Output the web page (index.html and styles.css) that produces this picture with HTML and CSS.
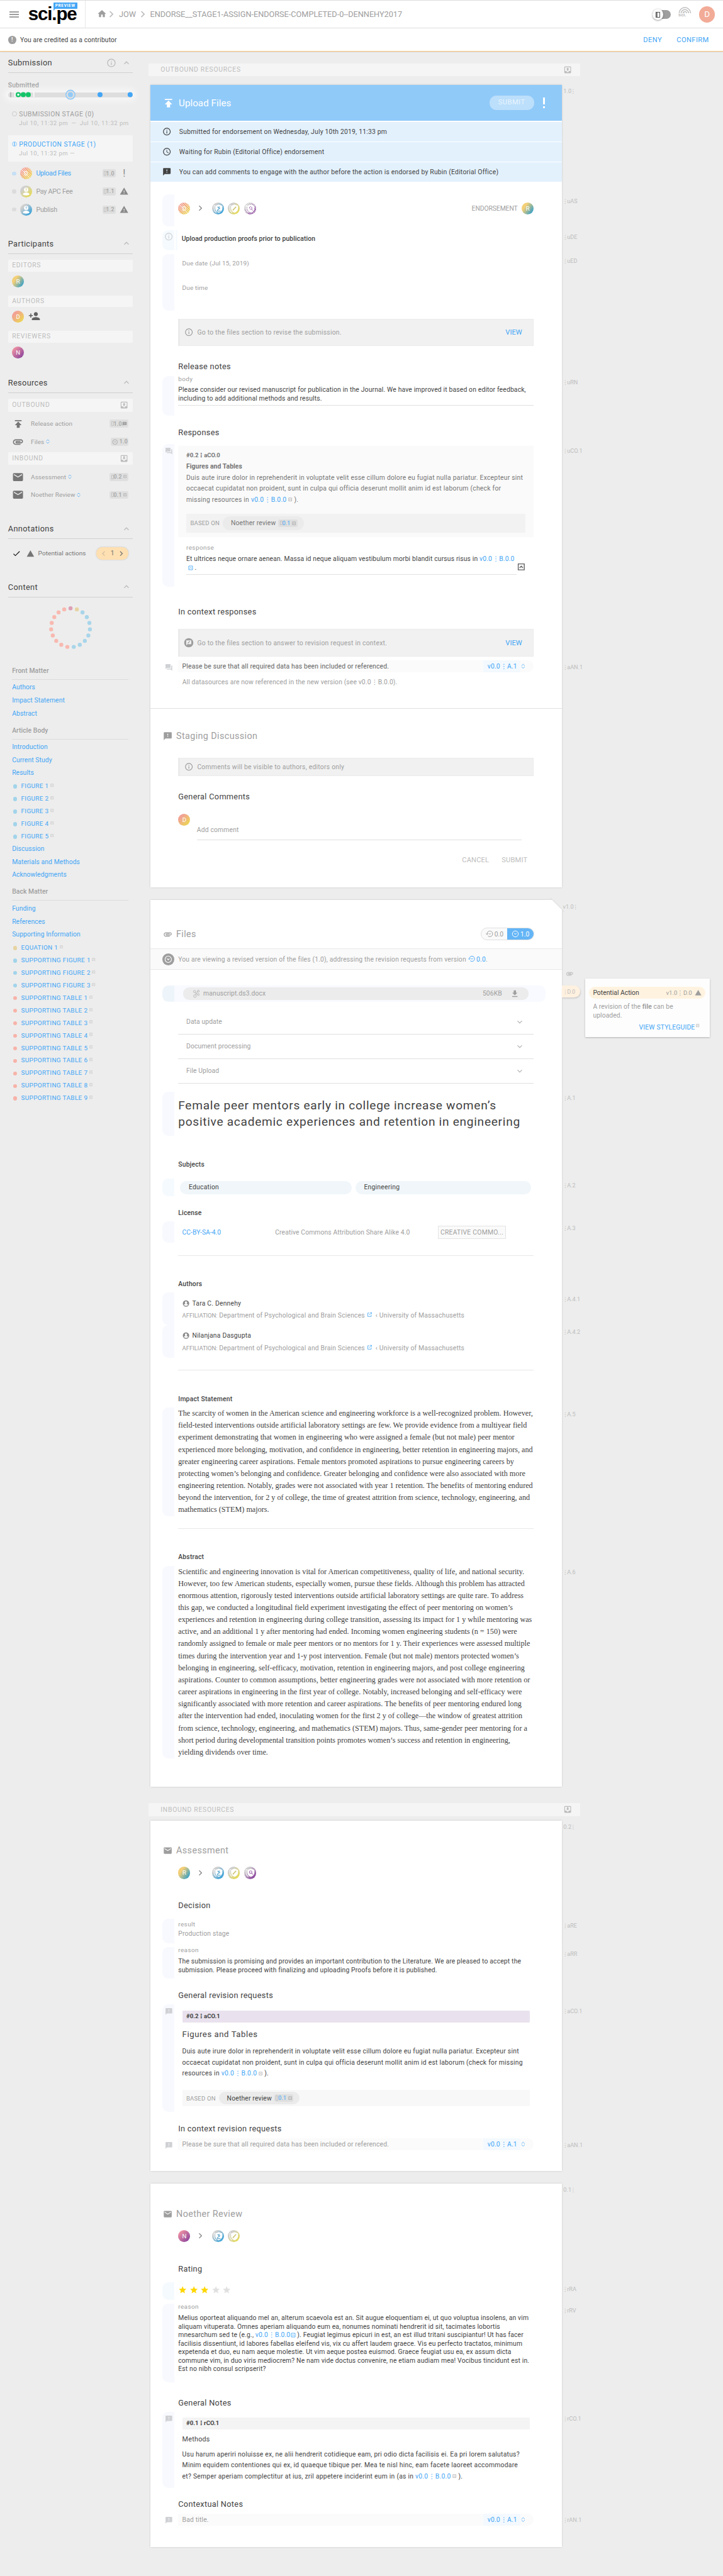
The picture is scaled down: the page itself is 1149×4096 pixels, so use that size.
FILE: index.html
```html
<!DOCTYPE html>
<html lang="en">
<head>
<meta charset="utf-8">
<title>sci.pe</title>
<link rel="stylesheet" href="styles.css">
</head>
<body>
<svg class="defs" width="0" height="0">
<symbol id="info" viewBox="0 0 24 24"><path d="M11 17h2v-6h-2v6zm1-15C6.5 2 2 6.500 2 12s4.500 10 10 10 10-4.500 10-10S17.500 2 12 2zm0 18c-4.400 0-8-3.600-8-8s3.600-8 8-8 8 3.600 8 8-3.600 8-8 8zM11 9h2V7h-2v2z"/></symbol>
<symbol id="clock" viewBox="0 0 24 24"><path d="M12 2C6.500 2 2 6.500 2 12s4.500 10 10 10 10-4.500 10-10S17.500 2 12 2zm0 18c-4.400 0-8-3.600-8-8s3.600-8 8-8 8 3.600 8 8-3.600 8-8 8zm.5-13H11v6l5.200 3.200.8-1.300-4.500-2.700z"/></symbol>
<symbol id="feedback" viewBox="0 0 24 24"><path d="M20 2H4c-1.100 0-2 .9-2 2v18l4-4h14c1.100 0 2-.9 2-2V4c0-1.100-.9-2-2-2zm-7 12h-2v-2h2v2zm0-4h-2V6h2v4z"/></symbol>
<symbol id="publish" viewBox="0 0 24 24"><path d="M4 3v2.500h16V3H4zm0 12h4.500v6.500h7V15H20l-8-8.500z"/></symbol>
<symbol id="clip" viewBox="0 0 24 24"><path d="M2 12.500C2 9.460 4.460 7 7.500 7H18c2.210 0 4 1.790 4 4s-1.790 4-4 4H9.500a2.500 2.500 0 0 1 0-5H17v2H9.410c-.55 0-.55 1 0 1H18c1.100 0 2-.9 2-2s-.9-2-2-2H7.500C5.570 9 4 10.570 4 12.500S5.570 16 7.500 16H17v2H7.500C4.460 18 2 15.540 2 12.500z"/></symbol>
<symbol id="mail" viewBox="0 0 24 24"><path d="M20 4H4c-1.100 0-2 .9-2 2v12c0 1.100.9 2 2 2h16c1.100 0 2-.9 2-2V6c0-1.100-.9-2-2-2zm0 4l-8 5-8-5V6l8 5 8-5v2z"/></symbol>
<symbol id="forum" viewBox="0 0 24 24"><path d="M21 6h-2v9H6v2c0 .55.45 1 1 1h11l4 4V7c0-.55-.45-1-1-1zm-4 6V3c0-.55-.45-1-1-1H3c-.55 0-1 .45-1 1v14l4-4h10c.55 0 1-.45 1-1z"/></symbol>
<symbol id="warn" viewBox="0 0 24 24"><path d="M1 21h22L12 2 1 21zm12-3h-2v-2h2v2zm0-4h-2v-4h2v4z"/></symbol>
<symbol id="tri" viewBox="0 0 24 24"><path d="M1 21h22L12 2z"/></symbol>
<symbol id="up" viewBox="0 0 24 24"><path d="M7.400 15.400L12 10.800l4.600 4.600L18 14l-6-6-6 6z"/></symbol>
<symbol id="down" viewBox="0 0 24 24"><path d="M7.400 8.600L12 13.200l4.600-4.600L18 10l-6 6-6-6z"/></symbol>
<symbol id="right" viewBox="0 0 24 24"><path d="M9 5.500L7.500 7l5 5-5 5L9 18.500l6.500-6.500z"/></symbol>
<symbol id="home" viewBox="0 0 24 24"><path d="M10 20v-6h4v6h5v-8h3L12 3 2 12h3v8z"/></symbol>
<symbol id="check" viewBox="0 0 24 24"><path d="M9 16.200L4.800 12l-1.400 1.400L9 19 21 7l-1.400-1.400z"/></symbol>
<symbol id="outbox" viewBox="0 0 24 24"><path d="M19 3H5c-1.100 0-2 .9-2 2v14c0 1.100.9 2 2 2h14c1.100 0 2-.9 2-2V5c0-1.100-.9-2-2-2zm0 12h-4c0 1.660-1.350 3-3 3s-3-1.340-3-3H5V5h14v10zM8 10h2v4h4v-4h2l-4-4z"/></symbol>
<symbol id="inbox" viewBox="0 0 24 24"><path d="M19 3H5c-1.100 0-2 .9-2 2v14c0 1.100.9 2 2 2h14c1.100 0 2-.9 2-2V5c0-1.100-.9-2-2-2zm0 12h-4c0 1.660-1.350 3-3 3s-3-1.340-3-3H5V5h14v10zM16 10h-2V6h-4v4H8l4 4z"/></symbol>
<symbol id="adduser" viewBox="0 0 24 24"><path d="M15 12c2.200 0 4-1.800 4-4s-1.800-4-4-4-4 1.800-4 4 1.800 4 4 4zm-9-2V7H4v3H1v2h3v3h2v-3h3v-2H6zm9 4c-2.700 0-8 1.300-8 4v2h16v-2c0-2.700-5.300-4-8-4z"/></symbol>
<symbol id="updown" viewBox="0 0 24 24"><path d="M5 10l7-7 7 7M5 14l7 7 7-7" fill="none" stroke="currentColor" stroke-width="2.200"/></symbol>
<symbol id="box" viewBox="0 0 24 24"><path d="M3 3h18v18H3zM7 15l5-5 5 5" fill="none" stroke="currentColor" stroke-width="2.600"/></symbol>
<symbol id="open" viewBox="0 0 24 24"><path d="M11 5H4v15h15v-7M14 3h7v7M21 3L10 14" fill="none" stroke="currentColor" stroke-width="2.200"/></symbol>
<symbol id="get" viewBox="0 0 24 24"><path d="M19 9h-4V3H9v6H5l7 7zM5 18v2.500h14V18z"/></symbol>
<symbol id="user" viewBox="0 0 24 24"><path d="M12 1a11 11 0 1 0 0 22 11 11 0 0 0 0-22zm0 4a4 4 0 1 1 0 8 4 4 0 0 1 0-8zm0 15c-3 0-5.500-1.500-7-3.500.5-2 4.500-3 7-3s6.500 1 7 3c-1.500 2-4 3.500-7 3.500z" fill-rule="evenodd"/></symbol>
<symbol id="shield" viewBox="0 0 24 24"><path d="M13.500 4l7 2.500v5.500c0 4-3 7-7 8.500-4-1.500-7-4.500-7-8.500V6.500z" fill="#fff"/><path d="M6 5.500L4 6.500V12c0 4 2 6.500 4.500 8" fill="none" stroke="#fff" stroke-width="1.300"/></symbol>
<symbol id="gavel" viewBox="0 0 24 24"><use href="#shield"/><path d="M11 8.500l4.500 4.500M15 8l-2.500 2.500M16 10.500L10 16M10 17h7" fill="none" stroke="currentColor" stroke-width="1.600"/></symbol>
<symbol id="pen" viewBox="0 0 24 24"><use href="#shield"/><path d="M10 15.500l6.500-7" fill="none" stroke="currentColor" stroke-width="2"/></symbol>
<symbol id="lens" viewBox="0 0 24 24"><use href="#shield"/><path d="M15 13l2.500 3M13 8.500a2.500 2.500 0 1 1 0 5 2.500 2.500 0 0 1 0-5z" fill="none" stroke="currentColor" stroke-width="1.400"/></symbol>
<symbol id="anon" viewBox="0 0 24 24"><circle cx="12" cy="8.500" r="4.300" fill="#fff"/><path d="M5.500 18c0-3 4-4.200 6.500-4.200s6.500 1.200 6.500 4.200c-2 2.300-11 2.300-13 0z" fill="#fff"/><path d="M10.800 7.500c0-1.800 2.600-1.600 2.400 0-.2 1-1.200 1-1.200 2M12 10.500v1" stroke="currentColor" fill="none"/></symbol>
<symbol id="badge" viewBox="0 0 24 24"><circle cx="12" cy="12" r="9.500" fill="none" stroke="currentColor" stroke-width="2"/><path d="M8.500 9.500L12 13.500l3.500-4" fill="none" stroke="currentColor" stroke-width="2"/></symbol>
<symbol id="history" viewBox="0 0 24 24"><path d="M4 12a9 9 0 1 1 3 6.500M1 11l3 3.500L7.500 11M9.500 10l3.500 3.500 3.500-3.500" fill="none" stroke="currentColor" stroke-width="2"/></symbol>
<symbol id="molecule" viewBox="0 0 24 24"><g fill="none" stroke="currentColor" stroke-width="1.500"><circle cx="7" cy="6" r="3"/><circle cx="17" cy="5" r="2.500"/><circle cx="8" cy="18" r="3.500"/><circle cx="17" cy="14" r="2.500"/><path d="M9 8l2 4-2 3M15 6l-4 6 4 2"/></g></symbol>
<symbol id="rate" viewBox="0 0 24 24"><circle cx="12" cy="12" r="11"/><path d="M6 18V6.500h12v9H9z" fill="#f1f1f1"/><path d="M9.500 13.500l5-5" stroke="currentColor" stroke-width="2"/></symbol>
<symbol id="star" viewBox="0 0 24 24"><path d="M12 17.300l6.200 3.700-1.600-7L22 9.200l-7.200-.6L12 2 9.200 8.600 2 9.200 7.500 14l-1.700 7z"/></symbol>
</svg>
<div class="page">
<header class="topbar">
  <div class="brand">
    <div class="burger"><i></i><i></i><i></i></div>
    <div class="logo">sci.pe<span class="preview">PREVIEW</span></div>
  </div>
  <nav class="crumbs">
    <svg class="i20"><use href="#home"/></svg><svg class="sep first-sep"><use href="#right"/></svg><span>JOW</span><svg class="sep"><use href="#right"/></svg><span>ENDORSE__STAGE1-ASSIGN-ENDORSE-COMPLETED-0--DENNEHY2017</span>
  </nav>
  <div class="tools">
    <div class="switch"><span class="knob"><i></i></span></div>
    <div class="mini"><svg width="26" height="14" viewBox="0 0 26 14"><path d="M1.500 14a11.500 11.500 0 0 1 23 0M5.500 14a7.500 7.500 0 0 1 15 0M9.500 14a3.500 3.500 0 0 1 7 0" fill="none" stroke="#bdbdbd" stroke-width="1.800"/></svg><b>sci.</b></div>
    <div class="me">D</div>
  </div>
</header>
<div class="alert"><span class="bang">!</span><span class="alert-text">You are credited as a contributor</span><a>DENY</a><a>CONFIRM</a></div>

<div class="layout">
<aside class="side">
  <h2 class="first">Submission<svg class="i20 tip"><use href="#info"/></svg><svg class="i20"><use href="#up"/></svg></h2>
  <div class="progress-label">Submitted</div>
  <div class="progress"><svg width="248" height="24" viewBox="0 -12 248 24"><path d="M5 -5v10" stroke="#9e9e9e" stroke-width="1.500"/><path d="M13.500 -5v10M51 -5v10" stroke="#fff" stroke-width="2"/><circle cx="30" cy="0" r="5" fill="#14c468"/><circle cx="40" cy="0" r="5" fill="#14c468"/><circle cx="20" cy="0" r="3.600" fill="#fff" stroke="#14c468" stroke-width="2.800"/><circle cx="124" cy="0" r="9" fill="#dedede" stroke="#90caf9" stroke-width="2"/><circle cx="124" cy="0" r="5" fill="#90caf9"/><circle cx="183" cy="0" r="5" fill="#42a5f5"/><circle cx="243" cy="0" r="5" fill="#42a5f5"/></svg></div>
  <div class="stage"><i class="ring"></i><div>SUBMISSION STAGE (0)</div><small>Jul 10, 11:32 pm&ensp;—&ensp;Jul 10, 11:32 pm</small></div>
  <div class="stage current"><i class="ring"></i><div>PRODUCTION STAGE (1)</div><small>Jul 10, 11:32 pm —</small></div>
  <div class="steps">
    <div class="step active"><i class="dot"></i><span class="av d striped">D</span><span class="name">Upload Files</span><span class="ver"><i></i>1.0</span><b class="mark">!</b></div>
    <div class="step"><i class="dot"></i><span class="av yel"><svg><use href="#anon"/></svg></span><span class="name">Pay APC Fee</span><span class="ver"><i></i>1.1</span><svg class="i18"><use href="#warn"/></svg></div>
    <div class="step"><i class="dot"></i><span class="av blu"><svg><use href="#anon"/></svg></span><span class="name">Publish</span><span class="ver"><i></i>1.2</span><svg class="i18"><use href="#warn"/></svg></div>
  </div>
  <h2 class="participants">Participants<svg class="i20"><use href="#up"/></svg></h2>
  <div class="group">EDITORS</div>
  <div class="people-row"><span class="av r">R</span></div>
  <div class="group">AUTHORS</div>
  <div class="people-row"><span class="av d">D</span><svg class="i24"><use href="#adduser"/></svg></div>
  <div class="group">REVIEWERS</div>
  <div class="people-row last"><span class="av n">N</span></div>
  <h2>Resources<svg class="i20"><use href="#up"/></svg></h2>
  <div class="group big">OUTBOUND<svg class="i18"><use href="#outbox"/></svg></div>
  <div class="resources">
    <div class="res"><svg class="i20"><use href="#publish"/></svg><span>Release action</span><span class="ver wide"><i></i>1.0<svg><use href="#feedback"/></svg></span></div>
    <div class="res"><svg class="i24"><use href="#clip"/></svg><span>Files</span><svg class="jump"><use href="#updown"/></svg><span class="ver badge"><svg><use href="#badge"/></svg>1.0</span></div>
  </div>
  <div class="group big in">INBOUND<svg class="i18"><use href="#inbox"/></svg></div>
  <div class="resources">
    <div class="res"><svg class="i24"><use href="#mail"/></svg><span>Assessment</span><svg class="jump"><use href="#updown"/></svg><span class="ver wide"><i></i>0.2 <svg class="tiny"><use href="#box"/></svg></span></div>
    <div class="res"><svg class="i24"><use href="#mail"/></svg><span>Noether Review</span><svg class="jump"><use href="#updown"/></svg><span class="ver wide"><i></i>0.1 <svg class="tiny"><use href="#box"/></svg></span></div>
  </div>
  <h2 class="annotations">Annotations<svg class="i20"><use href="#up"/></svg></h2>
  <div class="ann"><svg class="i18 tick"><use href="#check"/></svg><svg class="i16"><use href="#tri"/></svg><span>Potential actions</span><div class="pager"><svg class="i18 off"><use href="#right"/></svg><b>1</b><svg class="i18"><use href="#right"/></svg></div></div>
  <h2 class="content-h">Content<svg class="i20"><use href="#up"/></svg></h2>
  <svg class="wheel" width="88" height="88" viewBox="-44 -44 88 88">
    <circle cx="0" cy="-38.700" r="4" fill="#dda0b5"/><circle cx="12.600" cy="-36.600" r="4" fill="#e6d3a3"/>
    <g fill="#a8d5ea"><circle cx="23.800" cy="-30.500" r="4"/><circle cx="32.400" cy="-21.200" r="4"/><circle cx="37.500" cy="-9.500" r="4"/><circle cx="38.600" cy="3.200" r="4"/><circle cx="35.400" cy="15.500" r="4"/><circle cx="28.500" cy="26.200" r="4"/><circle cx="18.400" cy="34" r="4"/><circle cx="6.400" cy="38.200" r="4"/></g>
    <g fill="#f8b9b0"><circle cx="-6.400" cy="38.200" r="4"/><circle cx="-18.400" cy="34" r="4"/><circle cx="-28.500" cy="26.200" r="4"/><circle cx="-35.400" cy="15.500" r="4"/><circle cx="-38.600" cy="3.200" r="4"/><circle cx="-37.500" cy="-9.500" r="4"/><circle cx="-32.400" cy="-21.200" r="4"/><circle cx="-23.800" cy="-30.500" r="4"/><circle cx="-12.600" cy="-36.600" r="4"/></g>
  </svg>
  <nav class="toc">
    <h3>Front Matter</h3><a>Authors</a><a>Impact Statement</a><a>Abstract</a>
    <h3 class="next">Article Body</h3><a>Introduction</a><a>Current Study</a><a>Results</a>
    <a class="fig">FIGURE 1<svg><use href="#box"/></svg></a><a class="fig">FIGURE 2<svg><use href="#box"/></svg></a><a class="fig">FIGURE 3<svg><use href="#box"/></svg></a><a class="fig">FIGURE 4<svg><use href="#box"/></svg></a><a class="fig">FIGURE 5<svg><use href="#box"/></svg></a>
    <a>Discussion</a><a>Materials and Methods</a><a>Acknowledgments</a>
    <h3 class="next">Back Matter</h3><a>Funding</a><a>References</a><a>Supporting Information</a>
    <a class="fig eq">EQUATION 1<svg><use href="#box"/></svg></a>
    <a class="fig">SUPPORTING FIGURE 1<svg><use href="#box"/></svg></a><a class="fig">SUPPORTING FIGURE 2<svg><use href="#box"/></svg></a><a class="fig">SUPPORTING FIGURE 3<svg><use href="#box"/></svg></a>
    <a class="fig tab">SUPPORTING TABLE 1<svg><use href="#box"/></svg></a><a class="fig tab">SUPPORTING TABLE 2<svg><use href="#box"/></svg></a><a class="fig tab">SUPPORTING TABLE 3<svg><use href="#box"/></svg></a><a class="fig tab">SUPPORTING TABLE 4<svg><use href="#box"/></svg></a><a class="fig tab">SUPPORTING TABLE 5<svg><use href="#box"/></svg></a><a class="fig tab">SUPPORTING TABLE 6<svg><use href="#box"/></svg></a><a class="fig tab">SUPPORTING TABLE 7<svg><use href="#box"/></svg></a><a class="fig tab">SUPPORTING TABLE 8<svg><use href="#box"/></svg></a><a class="fig tab">SUPPORTING TABLE 9<svg><use href="#box"/></svg></a>
  </nav>
</aside>

<main class="main">
  <div class="bar"><span>OUTBOUND RESOURCES</span><svg class="i18"><use href="#outbox"/></svg></div>

  <section class="card upload">
    <span class="tag top">1.0 ⋮</span>
    <div class="banner"><svg class="i24"><use href="#publish"/></svg><span class="title">Upload Files</span><span class="submit">SUBMIT</span><b class="bang-lg"></b></div>
    <div class="notice"><svg class="i18"><use href="#info"/></svg>Submitted for endorsement on Wednesday, July 10th 2019, 11:33 pm</div>
    <div class="notice"><svg class="i18"><use href="#clock"/></svg>Waiting for Rubin (Editorial Office) endorsement</div>
    <div class="notice"><svg class="i18"><use href="#feedback"/></svg>You can add comments to engage with the author before the action is endorsed by Rubin (Editorial Office)</div>
    <div class="field f-people"><div class="gutter"></div><div class="people"><span class="av d striped">D</span><svg class="arrow"><use href="#right"/></svg><span class="av blu"><svg><use href="#gavel"/></svg></span><span class="av yel"><svg><use href="#pen"/></svg></span><span class="av pur striped"><svg><use href="#lens"/></svg></span><span class="endo">ENDORSEMENT</span><span class="av r">R</span></div><span class="tag">⋮ uAS</span></div>
    <div class="field f-desc"><div class="gutter blue"><svg class="i18"><use href="#info"/></svg></div><div class="desc">Upload production proofs prior to publication</div><span class="tag">⋮ uDE</span></div>
    <div class="field f-due"><div class="gutter"></div><div class="due"><div>Due date (Jul 15, 2019)</div><div>Due time</div></div><span class="tag">⋮ uED</span></div>
    <div class="hint tall h-revise"><svg class="i18"><use href="#info"/></svg><span>Go to the files section to revise the submission.</span><a>VIEW</a></div>
    <h3 class="h-release">Release notes</h3>
    <div class="field f-release"><div class="gutter"></div><div class="note underlined"><label>body</label><p>Please consider our revised manuscript for publication in the Journal. We have improved it based on editor feedback,<br>including to add additional methods and results.</p></div><span class="tag">⋮ uRN</span></div>
    <h3 class="h-responses">Responses</h3>
    <div class="field f-response"><div class="gutter"><svg class="i16"><use href="#forum"/></svg></div>
      <div>
        <div class="quote"><b class="ref">#0.2 ⋮ aCO.0</b><b class="topic">Figures and Tables</b><p>Duis aute irure dolor in reprehenderit in voluptate velit esse cillum dolore eu fugiat nulla pariatur. Excepteur sint<br>occaecat cupidatat non proident, sunt in culpa qui officia deserunt mollit anim id est laborum (check for<br>missing resources in <a class="loc">v0.0 ⋮ B.0.0</a> <svg class="tiny"><use href="#box"/></svg> ).</p>
          <div class="based"><span>BASED ON</span><div class="chip">Noether review <span class="ver link"><i></i>0.1 <svg class="tiny"><use href="#box"/></svg></span></div></div></div>
        <div class="answer"><div class="note underlined"><label>response</label><p>Et ultrices neque ornare aenean. Massa id neque aliquam vestibulum morbi blandit cursus risus in <a class="loc">v0.0 ⋮ B.0.0</a><br><a>&nbsp;<svg class="small"><use href="#box"/></svg></a> .</p></div><svg class="i16"><use href="#box"/></svg></div>
      </div><span class="tag">⋮ uCO.1</span></div>
    <h3 class="h-context">In context responses</h3>
    <div class="hint tall h-view"><svg class="i20"><use href="#rate"/></svg><span>Go to the files section to answer to revision request in context.</span><a>VIEW</a></div>
    <div class="field f-ann"><div class="side-icon"><svg class="i16"><use href="#forum"/></svg></div><div class="annot dark"><span>Please be sure that all required data has been included or referenced.</span><a class="loc">v0.0 ⋮ A.1</a><svg class="jump"><use href="#updown"/></svg></div><span class="tag">⋮ aAN.1</span></div>
    <div class="reply">All datasources are now referenced in the new version (see <span class="loc">v0.0 ⋮ B.0.0</span>).</div>
    <div class="section-head staging"><svg class="i20"><use href="#feedback"/></svg>Staging Discussion</div>
    <div class="hint short"><svg class="i18"><use href="#info"/></svg><span>Comments will be visible to authors, editors only</span></div>
    <h3 class="h-comments">General Comments</h3>
    <div class="comment"><span class="av d">D</span><div class="input">Add comment</div></div>
    <div class="actions"><span>CANCEL</span><span>SUBMIT</span></div>
  </section>

  <section class="card files">
    <span class="tag top v1">v1.0 ⋮</span>
    <div class="section-head files-head"><svg class="i20"><use href="#clip"/></svg><span class="grow">Files</span><div class="toggle"><span><svg><use href="#history"/></svg>0.0</span><span class="on"><svg><use href="#badge"/></svg>1.0</span></div></div>
    <div class="version"><span class="disc"><svg class="i16"><use href="#badge"/></svg></span><span>You are viewing a revised version of the files (1.0), addressing the revision requests from version <a><svg><use href="#history"/></svg>0.0</a>.</span></div>
    <div class="field f-doc"><div class="gutter teal"></div><div class="doc"><svg class="i18"><use href="#molecule"/></svg><span class="grow">manuscript.ds3.docx</span><span>506KB</span><svg class="i18"><use href="#get"/></svg></div><svg class="i16 clip-mark"><use href="#clip"/></svg><span class="tab-d">⋮ D.0</span>
      <div class="potential"><div class="pot-head"><b>Potential Action</b><span class="loc">v1.0 ⋮ D.0</span><svg class="i14"><use href="#tri"/></svg></div><p>A revision of the <b>file</b> can be<br>uploaded.</p><a>VIEW STYLEGUIDE<svg class="tiny"><use href="#box"/></svg></a></div></div>
    <div class="accordion"><div>Data update<svg class="i20"><use href="#down"/></svg></div><div>Document processing<svg class="i20"><use href="#down"/></svg></div><div>File Upload<svg class="i20"><use href="#down"/></svg></div></div>
    <div class="field f-title"><div class="gutter"></div><h1>Female peer mentors early in college increase women’s<br>positive academic experiences and retention in engineering</h1><span class="tag">⋮ A.1</span></div>
    <h4>Subjects</h4>
    <div class="field f-subjects"><div class="gutter blue"></div><div class="subjects"><span>Education</span><span>Engineering</span></div><span class="tag">⋮ A.2</span></div>
    <h4 class="license-h">License</h4>
    <div class="field f-license"><div class="gutter"></div><div class="license"><a>CC-BY-SA-4.0</a><span>Creative Commons Attribution Share Alike 4.0</span><em>CREATIVE COMMO...</em></div><span class="tag">⋮ A.3</span></div>
    <hr>
    <h4>Authors</h4>
    <div class="field f-author"><div class="gutter"></div><div class="author"><div><svg class="i14"><use href="#user"/></svg>Tara C. Dennehy</div><p><small>AFFILIATION:</small> Department of Psychological and Brain Sciences <svg><use href="#open"/></svg>&nbsp; ‹ University of Massachusetts</p></div><span class="tag">⋮ A.4.1</span></div>
    <div class="field f-author second"><div class="gutter"></div><div class="author"><div><svg class="i14"><use href="#user"/></svg>Nilanjana Dasgupta</div><p><small>AFFILIATION:</small> Department of Psychological and Brain Sciences <svg><use href="#open"/></svg>&nbsp; ‹ University of Massachusetts</p></div><span class="tag">⋮ A.4.2</span></div>
    <hr>
    <h4>Impact Statement</h4>
    <div class="field f-text"><div class="gutter"></div><p class="prose">The scarcity of women in the American science and engineering workforce is a well-recognized problem. However,<br>field-tested interventions outside artificial laboratory settings are few. We provide evidence from a multiyear field<br>experiment demonstrating that women in engineering who were assigned a female (but not male) peer mentor<br>experienced more belonging, motivation, and confidence in engineering, better retention in engineering majors, and<br>greater engineering career aspirations. Female mentors promoted aspirations to pursue engineering careers by<br>protecting women’s belonging and confidence. Greater belonging and confidence were also associated with more<br>engineering retention. Notably, grades were not associated with year 1 retention. The benefits of mentoring endured<br>beyond the intervention, for 2 y of college, the time of greatest attrition from science, technology, engineering, and<br>mathematics (STEM) majors.</p><span class="tag">⋮ A.5</span></div>
    <hr>
    <h4>Abstract</h4>
    <div class="field f-text"><div class="gutter"></div><p class="prose">Scientific and engineering innovation is vital for American competitiveness, quality of life, and national security.<br>However, too few American students, especially women, pursue these fields. Although this problem has attracted<br>enormous attention, rigorously tested interventions outside artificial laboratory settings are quite rare. To address<br>this gap, we conducted a longitudinal field experiment investigating the effect of peer mentoring on women’s<br>experiences and retention in engineering during college transition, assessing its impact for 1 y while mentoring was<br>active, and an additional 1 y after mentoring had ended. Incoming women engineering students (n = 150) were<br>randomly assigned to female or male peer mentors or no mentors for 1 y. Their experiences were assessed multiple<br>times during the intervention year and 1-y post intervention. Female (but not male) mentors protected women’s<br>belonging in engineering, self-efficacy, motivation, retention in engineering majors, and post college engineering<br>aspirations. Counter to common assumptions, better engineering grades were not associated with more retention or<br>career aspirations in engineering in the first year of college. Notably, increased belonging and self-efficacy were<br>significantly associated with more retention and career aspirations. The benefits of peer mentoring endured long<br>after the intervention had ended, inoculating women for the first 2 y of college—the window of greatest attrition<br>from science, technology, engineering, and mathematics (STEM) majors. Thus, same-gender peer mentoring for a<br>short period during developmental transition points promotes women’s success and retention in engineering,<br>yielding dividends over time.</p><span class="tag">⋮ A.6</span></div>
  </section>

  <div class="bar inbound"><span>INBOUND RESOURCES</span><svg class="i18"><use href="#inbox"/></svg></div>

  <section class="card assessment">
    <span class="tag top">0.2 ⋮</span>
    <div class="section-head"><svg class="i20"><use href="#mail"/></svg>Assessment</div>
    <div class="people lone"><span class="av r">R</span><svg class="arrow"><use href="#right"/></svg><span class="av blu"><svg><use href="#gavel"/></svg></span><span class="av yel"><svg><use href="#pen"/></svg></span><span class="av pur"><svg><use href="#lens"/></svg></span></div>
    <h3 class="h-decision">Decision</h3>
    <div class="field f-result"><div class="gutter"></div><div class="result"><label>result</label><div>Production stage</div></div><span class="tag">⋮ aRE</span></div>
    <div class="field f-reason"><div class="gutter"></div><div class="note"><label>reason</label><p>The submission is promising and provides an important contribution to the Literature. We are pleased to accept the<br>submission. Please proceed with finalizing and uploading Proofs before it is published.</p></div><span class="tag">⋮ aRR</span></div>
    <h3 class="h-requests">General revision requests</h3>
    <div class="field f-request"><div class="gutter"><svg class="i16"><use href="#feedback"/></svg></div><div class="request"><b class="refbar violet">#0.2 ⋮ aCO.1</b><h5>Figures and Tables</h5><p>Duis aute irure dolor in reprehenderit in voluptate velit esse cillum dolore eu fugiat nulla pariatur. Excepteur sint<br>occaecat cupidatat non proident, sunt in culpa qui officia deserunt mollit anim id est laborum (check for missing<br>resources in <a class="loc">v0.0 ⋮ B.0.0</a> <svg class="tiny"><use href="#box"/></svg> ).</p><div class="based"><span>BASED ON</span><div class="chip">Noether review <span class="ver link"><i></i>0.1 <svg class="tiny"><use href="#box"/></svg></span></div></div></div><span class="tag">⋮ aCO.1</span></div>
    <h3 class="h-incontext">In context revision requests</h3>
    <div class="field f-row"><div class="side-icon"><svg class="i16"><use href="#feedback"/></svg></div><div class="annot"><span>Please be sure that all required data has been included or referenced.</span><a class="loc">v0.0 ⋮ A.1</a><svg class="jump"><use href="#updown"/></svg></div><span class="tag">⋮ aAN.1</span></div>
  </section>

  <section class="card review">
    <span class="tag top">0.1 ⋮</span>
    <div class="section-head"><svg class="i20"><use href="#mail"/></svg>Noether Review</div>
    <div class="people lone"><span class="av n">N</span><svg class="arrow"><use href="#right"/></svg><span class="av blu"><svg><use href="#gavel"/></svg></span><span class="av yel"><svg><use href="#pen"/></svg></span></div>
    <h3 class="h-rating">Rating</h3>
    <div class="field f-stars"><div class="gutter blue"></div><div class="stars"><svg><use href="#star"/></svg><svg><use href="#star"/></svg><svg><use href="#star"/></svg><svg class="dim"><use href="#star"/></svg><svg class="dim"><use href="#star"/></svg></div><span class="tag">⋮ rRA</span></div>
    <div class="field f-review"><div class="gutter"></div><div class="note"><label>reason</label><p>Melius oporteat aliquando mel an, alterum scaevola est an. Sit augue eloquentiam ei, ut quo voluptua insolens, an vim<br>aliquam vituperata. Omnes aperiam aliquando eum ea, nonumes nominati hendrerit id sit, tacimates lobortis<br>mnesarchum sed te (e.g., <a class="loc">v0.0 ⋮ B.0.0 <svg class="small"><use href="#box"/></svg></a> ). Feugiat legimus epicuri in est, an est illud tritani suscipiantur! Ut has facer<br>facilisis dissentiunt, id labores fabellas eleifend vis, vix cu affert laudem graece. Vis eu perfecto tractatos, minimum<br>expetenda et duo, eu nam aeque molestie. Ut vim aeque postea euismod. Graece feugiat usu ea, ex assum dicta<br>commune vim, in duo viris mediocrem? Ne nam vide doctus convenire, ne etiam audiam mea! Vocibus tincidunt est in.<br>Est no nibh consul scripserit?</p></div><span class="tag">⋮ rRV</span></div>
    <h3 class="h-notes">General Notes</h3>
    <div class="field f-notes"><div class="gutter"><svg class="i16"><use href="#feedback"/></svg></div><div class="request"><b class="refbar">#0.1 ⋮ rCO.1</b><h5 class="sm">Methods</h5><p>Usu harum aperiri noluisse ex, ne alii hendrerit cotidieque eam, pri odio dicta facilisis ei. Ea pri lorem salutatus?<br>Minim equidem contentiones qui ex, id quaeque tibique per. Mea te nisl hinc, eam facete laoreet accommodare<br>et? Semper aperiam complectitur at ius, zril appetere inciderint eum in (as in <a class="loc">v0.0 ⋮ B.0.0</a> <svg class="tiny"><use href="#box"/></svg> ).</p></div><span class="tag">⋮ rCO.1</span></div>
    <h3 class="h-contextual">Contextual Notes</h3>
    <div class="field f-row"><div class="side-icon"><svg class="i16"><use href="#feedback"/></svg></div><div class="annot"><span>Bad title.</span><a class="loc">v0.0 ⋮ A.1</a><svg class="jump"><use href="#updown"/></svg></div><span class="tag">⋮ rAN.1</span></div>
  </section>
</main>
</div>
</div>
</body>
</html>
```
FILE: styles.css
```css
*{box-sizing:border-box}
html,body{margin:0;padding:0;background:#ededed}
body{overflow:hidden;height:4096px;font-family:Roboto,"DejaVu Sans",sans-serif;font-size:13px;color:#424242}
h1,h2,h3,h4,h5,p{margin:0;font-weight:400}
svg{fill:currentColor;flex:none}
a{color:#42a5f5}
i{font-style:normal}
.defs{position:absolute}
.page{zoom:.798;width:1440px;height:5132px;white-space:nowrap}
.i14{width:14px;height:14px}.i16{width:16px;height:16px}.i18{width:18px;height:18px}.i20{width:20px;height:20px}.i24{width:24px;height:24px}
.tiny{width:8px;height:8px;color:#9e9e9e}
.small{width:10px;height:10px;vertical-align:-1px}
.grow{flex:1}
.loc{word-spacing:-3px}

.topbar{height:57px;background:#fff;border-top:1px solid #ddd;border-bottom:1px solid #ddd;display:flex;align-items:center;color:#9e9e9e}
.brand{width:171px;height:55px;border-right:1px solid #e8e8e8;display:flex;padding-left:19px}
.burger{width:18px;display:flex;flex-direction:column;justify-content:space-between;height:13px;margin:21px 19px 0 0}
.burger i{height:2.500px;background:#9e9e9e}
.logo{position:relative;color:#000;font:bold 37px/36px "Liberation Sans",sans-serif;letter-spacing:-1.400px;margin-top:9px}
.preview{position:absolute;left:50px;top:-5px;width:48px;height:12px;border-radius:1px;background:#42a5f5;color:#fff;font:bold 8px/13px Roboto,sans-serif;letter-spacing:.9px;text-align:center}
.preview::after{content:"";position:absolute;left:0;top:12px;border-top:4px solid #42a5f5;border-right:4px solid transparent}
.crumbs{flex:1;display:flex;align-items:center;padding:0 0 1px 22px;font-size:16px;letter-spacing:-.05px}
.sep{width:24px;height:24px;color:#bdbdbd;margin:0 2px}
.first-sep{margin-left:-2px}
.tools{display:flex;align-items:center;padding-right:16px}
.switch{position:relative;width:29px;height:18px;margin-right:15px;border-radius:9px;background:#9e9e9e;margin-top:1px}
.knob{position:absolute;left:-8px;top:-2px;width:22px;height:22px;border-radius:50%;background:#fafafa;box-shadow:0 1px 3px rgba(0,0,0,.45);display:flex;align-items:center;justify-content:center}
.knob i{width:9px;height:11px;border:1.500px solid #555;background:linear-gradient(90deg,#888 45%,#fafafa 45%)}
.mini{width:26px;height:26px;margin:-6px 15px 0 0;line-height:8px;font-size:10px;color:#bdbdbd}
.mini svg{display:block}
.me{width:32px;height:32px;border-radius:50%;background:#f2ab97;color:#fff;font-size:17px;line-height:32px;text-align:center}
.alert{height:45.500px;background:#fff;border-bottom:2.500px solid #ffca7a;display:flex;align-items:center;padding:0 28px 0 16px;box-shadow:0 1px 2px rgba(0,0,0,.2);position:relative}
.bang{width:16px;height:16px;border-radius:50%;background:#9e9e9e;color:#fff;font-weight:700;font-size:11px;line-height:16px;text-align:center;margin-right:8px}
.alert-text{flex:1;letter-spacing:.16px}
.alert a{font-size:14px;letter-spacing:.5px;margin-left:29px}

.layout{display:flex;align-items:flex-start}
.side{width:248px;margin:0 32px 0 16px;flex:none;display:flex;flex-direction:column;color:#9e9e9e}
.side h2{height:40px;border-bottom:2px solid #d0d0d0;font-size:16px;line-height:39px;letter-spacing:.45px;color:#424242;display:flex;align-items:center;padding-right:2px}
.side h2 svg{margin-left:auto;color:#bdbdbd}
.side h2 .tip+svg{margin-left:10px}
.first{margin-top:3.500px}
.progress-label{font-weight:500;line-height:18px;margin-top:16px;letter-spacing:.2px}
.progress{height:10px;margin-top:4px;border-radius:5px;background:#dedede;box-shadow:0 0 12px 6px #f8f8f8}
.progress svg{display:block;margin-top:-7px;overflow:visible}
.stage{position:relative;height:52px;padding:9.500px 0 0 22px;margin-top:16px;line-height:18px;letter-spacing:.55px}
.stage+.stage{margin-top:8px}
.stage div{height:18px}
.stage small{font-size:12px;color:#bdbdbd;letter-spacing:.6px;display:block}
.stage.current{background:#f5f5f5;border-radius:2px}
.current div{color:#42a5f5}
.ring{position:absolute;left:8px;top:12px;width:10px;height:10px;border-radius:50%;border:2px solid #ccc}
.current .ring{border-color:#90caf9;background:linear-gradient(90deg,transparent 35%,#90caf9 35% 65%,transparent 65%)}
.steps{margin-top:5.600px}
.step{display:flex;align-items:center;height:36px;padding:0 8px;font-size:13.500px;letter-spacing:-.35px}
.dot{width:8px;height:8px;border-radius:50%;background:#dcdcdc;margin-right:8px}
.active .dot{background:#c5dff5}
.active .name{color:#42a5f5}
.step .av{margin-right:8px}
.name{flex:1}
.step>.i18,.mark{width:18px;margin-left:8px;text-align:center;color:#8a8a8a}
.mark{font-size:20px;font-weight:400}
.av{width:24px;height:24px;border-radius:50%;display:block;position:relative;color:#fff;font-size:12px;line-height:24px;text-align:center;flex:none;letter-spacing:0}
.av svg{width:24px;height:24px;display:block}
.d{background:linear-gradient(135deg,#f2a294 25%,#ecd455 85%)}
.r{background:linear-gradient(125deg,#f3cf77 30%,#3fa2c4 85%)}
.n{background:linear-gradient(135deg,#e88ca2 20%,#8b449c 90%)}
.blu{background:linear-gradient(135deg,#cfcfcf 25%,#3aa2d8 85%);color:#62aad0}
.yel{background:linear-gradient(135deg,#cfcfcf 25%,#e5da58 85%);color:#cfc573}
.pur{background:linear-gradient(135deg,#cfcfcf 25%,#8b449c 85%);color:#a672b4}
.striped::after{content:"";position:absolute;inset:0;border-radius:50%;background:repeating-linear-gradient(45deg,rgba(255,255,255,.65) 0 1px,transparent 1px 3px)}
.ver{display:flex;align-items:center;justify-content:center;width:26px;height:16px;border-radius:3px;background:#dfdfdf;font-size:11px;font-weight:500;letter-spacing:.3px;color:#a3a3a3;white-space:pre}
.ver i{width:5px;height:9px;border:1px solid #c4c4c4}
.wide{width:38px}
.wide svg{width:10px;height:10px}
.wide .tiny{width:7px;height:7px}
.badge{width:35px}
.badge svg{width:12px;height:12px;margin-right:3px}
.participants{margin-top:30.400px}
.group{height:23px;margin-top:12px;padding-left:8px;background:#f5f5f5;border-radius:2px;line-height:23px;letter-spacing:.9px;color:#bdbdbd}
.people-row+.group{margin-top:0}
.people-row{height:48px;padding:7.500px 8px;display:flex}
.people-row svg{margin-left:8px;margin-top:-2px;color:#616161}
.people-row.last{height:60px}
.group.big{height:26px;line-height:26px;display:flex;align-items:center;justify-content:space-between;padding-right:8px}
.resources{padding:5.500px 8px 0}
.res{height:36px;display:flex;align-items:center;font-size:12.500px;letter-spacing:.1px}
.res>svg:first-child{margin-right:13.500px;color:#757575}
.res>.i20:first-child{margin:0 15.500px 0 2px}
.res .ver{margin-left:auto}
.jump{width:10px;height:10px;margin-left:2px;color:#42a5f5}
.group.in{margin-top:2.500px}
.annotations{margin-top:30.300px}
.ann{height:36px;margin-top:10.400px;display:flex;align-items:center;padding:0 8px;color:#757575;font-size:12.500px;letter-spacing:.1px}
.tick{color:#111;margin-right:11px}
.ann .i16{margin-right:7px}
.pager{margin-left:auto;width:64px;height:24px;border-radius:12px;background:#ffe0b2;box-shadow:0 0 3px rgba(0,0,0,.2);display:flex;align-items:center;justify-content:space-evenly;font-size:13px}
.pager b{font-weight:400}
.off{transform:scaleX(-1);opacity:.3}
.content-h{margin-top:29.600px}
.wheel{align-self:center;margin-top:16px}
.toc{padding:0 8px;margin-top:30px;letter-spacing:.1px}
.toc h3{height:30px;line-height:25px;border-bottom:1px solid #dcdcdc;font-size:13px;font-weight:500;margin-bottom:3px}
.toc h3.next{margin-top:8px}
.toc a{display:block;height:26px;line-height:26px}
.toc .fig{position:relative;height:25px;line-height:25px;padding-left:18px;font-size:12.500px;letter-spacing:.42px}
.fig::before{content:"";position:absolute;left:2px;top:9px;width:8px;height:8px;border-radius:50%;background:#a2d4ea}
.eq::before{background:#e6d3a0}
.tab::before{background:#f7b3a9}
.fig svg{width:7px;height:7px;color:#bdbdbd;margin-left:3px;vertical-align:2px}

.main{width:860px;flex:none;display:flex;flex-direction:column}
.bar{height:26px;margin-top:23.500px;padding:0 16px 0 24px;background:#f5f5f5;border-radius:2px;display:flex;align-items:center;justify-content:space-between;color:#bdbdbd;letter-spacing:.9px}
.bar.inbound{margin-top:33px}
.card{position:relative;width:820.500px;margin-left:3px;background:#fff;box-shadow:0 0 3px rgba(0,0,0,.18);display:flex;flex-direction:column}
.upload{margin-top:17px;height:1599px}
.files{margin-top:25px;height:1767px}
.assessment{margin-top:9px;height:698px}
.review{margin-top:25.500px;height:723.500px}
.tag{position:absolute;left:797px;top:6px;font-size:11.500px;line-height:14px;color:#bdbdbd;word-spacing:-5px}
.tag.top{left:823px;top:5px}
.banner{height:72px;background:#90caf9;display:flex;align-items:center;padding:0 28px 0 24px;color:#fff}
.banner .i24{width:22px;height:22px;margin-right:10px;margin-left:1px}
.title{flex:1;font-size:19px;letter-spacing:.05px}
.submit{width:89px;height:28px;border-radius:14px;background:#bcdffb;line-height:28px;text-align:center;font-size:14px;letter-spacing:.6px;color:#e9f5fe}
.bang-lg{width:4px;height:22px;margin:0 6px 0 18px;background:linear-gradient(#fff 14px,transparent 14px 18px,#fff 18px)}
.banner+.notice{margin-top:2px}
.notice{height:39px;margin-bottom:1px;padding-left:24px;background:#e3f1fd;display:flex;align-items:center;letter-spacing:.27px}
.notice svg{margin-right:16px}
.field{position:relative;display:grid;grid-template-columns:24px 708px;column-gap:8px;margin-left:24px;width:740px;flex:none}
.gutter{background:#f8f9fe;border-radius:12px 0 0 12px;color:#cfd1d4;padding:6px 0 0 5px}
.gutter.blue{background:#f5fafe}
.gutter.teal{background:#eef5fa}
.gutter svg{display:block}
.side-icon{color:#cfd1d4;padding:6px 0 0 5px}
.people{height:24px;display:flex;align-items:center;gap:8px}
.arrow{width:20px;height:20px;margin:0 4px 0 3px;color:#8a8a8a}
.endo{margin-left:auto;color:#9e9e9e;letter-spacing:-.1px}
.f-people{height:64px;margin-top:24px}
.f-people .people{margin-top:16px}
.f-desc{height:40px;margin-top:8px}
.f-desc .gutter{padding:3px 0 0 4px}
.desc{font-weight:500;line-height:34px;letter-spacing:.13px;border-left:4px solid #f5fafe;margin-left:-5px;padding-left:8px}
.f-due{height:112px;margin-top:8px}
.due{font-size:12.500px;letter-spacing:.2px;color:#9e9e9e;padding-left:8px;line-height:38px}
.due div+div{line-height:57px}
.hint{width:708px;margin-left:56px;flex:none;height:54px;background:#f1f1f1;border:1px solid #ebebeb;border-left-width:4px;display:flex;align-items:center;padding:0 22px 0 8px;color:#9e9e9e;letter-spacing:.3px}
.hint svg{width:18px;height:18px;margin-right:8px}
.hint a{margin-left:auto;font-size:14px;letter-spacing:0}
.h-revise{margin-top:16px}
.card h3{height:36px;line-height:36px;margin-left:56px;font-size:16px;letter-spacing:.38px;flex:none}
.card .h-release{margin-top:24px}
.note{letter-spacing:.19px}
.note label,.result label{display:block;height:13px;line-height:13px;font-size:12.500px;letter-spacing:.5px;color:#9e9e9e}
.note p{padding-top:7px;line-height:17px}
.underlined p{border-bottom:1px solid #e0e0e0;padding-bottom:4px}
.f-release{height:80px}
.h-responses{margin-top:16px}
.f-response{height:285px;margin-top:4px}
.quote{height:181px;margin-top:4px;padding:7px 16px 0;background:#fafafa;color:#757575;letter-spacing:.3px}
.quote p,.request p{line-height:22px}
.ref{display:block;height:22px;line-height:22px;font-size:12px;word-spacing:-3.500px;letter-spacing:0}
.topic{display:block;height:23px;line-height:24px;letter-spacing:.1px}
.based{height:37.500px;margin-top:17px;background:#f2f2f2;display:flex;align-items:center;padding-left:8px}
.based>span{font-size:12px;color:#9e9e9e;letter-spacing:.2px;width:65px}
.chip{width:161px;height:28px;border-radius:14px;background:#ebebeb;display:flex;align-items:center;padding-left:16px;letter-spacing:.2px}
.chip .ver{width:38px;height:16px;margin-left:5px}
.ver.link{color:#42a5f5;font-weight:400}
.answer{display:flex;padding:16px 0 0 16px;color:#424242}
.answer .note{width:658px}
.answer>.i16{margin:36px 0 0 1px;color:#616161}
.h-context{margin-top:32px}
.h-view{margin-top:16px}
.h-view svg{width:20px;height:20px;margin:0 7px 0 -1px}
.f-ann{height:24px;margin-top:8px}
.annot{height:24px;display:flex;align-items:center;background:#fbfbfb;border-radius:2px 12px 12px 2px;padding-left:8px;letter-spacing:.2px;color:#9e9e9e}
.annot.dark{color:#616161}
.annot span{flex:1}
.annot a{width:73px;height:24px;line-height:24px;background:#f3f9fe;padding-left:8px;letter-spacing:.2px}
.annot .jump{margin:0 15px 0 1px;width:11px;height:11px}
.reply{height:24px;line-height:24px;margin:8px 0 0 64px;color:#9e9e9e;letter-spacing:.15px}
.section-head{height:48px;display:flex;align-items:center;padding-left:26px;margin-top:36px;font-size:18px;letter-spacing:.48px;color:#9e9e9e;flex:none}
.section-head>svg{margin-right:7px;width:19px;height:19px}
.staging{height:79px;margin-top:40px;border-top:1px solid #e0e0e0;padding-top:30px}
.hint.short{height:36px;margin-top:19.500px}
.h-comments{margin-top:23.500px}
.comment{display:flex;margin:16px 0 0 56px}
.input{width:647px;height:52px;margin-left:13px;line-height:66px;border-bottom:1px solid #e0e0e0;color:#9e9e9e;letter-spacing:.2px}
.actions{display:flex;justify-content:flex-end;gap:25px;padding-right:69px;margin-top:28px;line-height:24px;font-size:14px;letter-spacing:.2px;color:#bdbdbd}

.files::after{content:"";position:absolute;right:-4px;top:-4px;width:27px;height:27.500px;background:linear-gradient(45deg,transparent 49%,#ddd 50%,#ededed 53%)}
.tag.top.v1{left:822px;top:7px;z-index:1}
.files-head{height:53px;margin-top:45px;border-bottom:1px solid #e8e8e8;padding:0 56px 5px 26px}
.toggle{width:106px;height:25px;border-radius:12.500px;border:1px solid #e0e0e0;background:#fafafa;overflow:hidden;display:flex;font-size:13px;letter-spacing:0}
.toggle span{width:53px;display:flex;align-items:center;justify-content:center}
.toggle svg{width:15px;height:15px;margin-right:2px}
.toggle .on{background:#64b5f6;color:#fff;margin:-1px}
.version{height:42px;background:#fafafa;border-bottom:1px solid #e8e8e8;display:flex;align-items:center;padding-left:24px;color:#9e9e9e;letter-spacing:.2px;flex:none}
.disc{width:24px;height:24px;border-radius:50%;background:#9e9e9e;color:#fff;display:flex;align-items:center;justify-content:center;margin-right:8px}
.version a svg{width:14px;height:14px;margin-right:3px;vertical-align:-2px}
.f-doc{height:32px;margin-top:31px}
.f-doc::before{content:"";position:absolute;left:24px;right:-24px;top:0;bottom:0;background:#f8faff;border-radius:0 12px 12px 0}
.doc{position:relative;height:24px;margin:4px 10px 0;border-radius:12px;background:#ececec;display:flex;align-items:center;padding:0 19px 0 17px;color:#9e9e9e;letter-spacing:.15px}
.doc .i18:first-child{margin-right:5px;opacity:.7}
.doc .i18:last-child{margin-left:16px}
.clip-mark{position:absolute;left:803px;top:-32px;color:#bdbdbd}
.tab-d{position:absolute;left:796px;top:0;width:36px;height:24px;border-radius:0 12px 12px 0;background:#fff1e0;box-shadow:1px 2px 3px rgba(0,0,0,.15);font-size:11.500px;line-height:24px;padding-left:1px;word-spacing:-5px;color:#bdbdbd}
.potential{position:absolute;left:842px;top:-14px;width:248px;height:116px;background:#fdfdfd;box-shadow:0 1px 3px rgba(0,0,0,.25);padding:16px 8px;color:#9e9e9e}
.pot-head{height:24px;border-radius:12px;background:#fff3e0;display:flex;align-items:center;padding:0 8px;color:#9e9e9e;font-size:12px}
.pot-head b{flex:1;font-weight:400;font-size:13px;color:#424242;word-spacing:0}
.pot-head svg{margin-left:5px}
.potential p{padding:8px 8px 0;line-height:17px;letter-spacing:.1px}
.potential>a{display:block;text-align:right;padding-right:12px;margin-top:6px;line-height:20px;letter-spacing:.2px}
.potential>a svg{width:7px;height:7px;margin-left:2px;vertical-align:4px}
.accordion{margin:16px 0 0 56px;width:708px}
.accordion div{height:49px;border-bottom:1px solid #e0e0e0;display:flex;align-items:center;justify-content:space-between;padding:0 18px 0 16px;color:#9e9e9e;letter-spacing:.1px}
.accordion svg{color:#bdbdbd}
.f-title{height:88px;margin-top:16px}
h1{font-size:24px;line-height:32px;letter-spacing:.88px;padding-top:12px}
.card h4{height:24px;line-height:24px;margin:45px 0 0 56px;font-size:13px;font-weight:500;letter-spacing:.25px;flex:none}
.f-subjects{height:35px;margin-top:17px}
.subjects{display:grid;grid-template-columns:341px 350px;gap:8px;padding:4px 4px 0}
.subjects span{height:27px;line-height:26px;border-radius:13px;background:#f0f6fa;padding-left:17px;letter-spacing:.3px}
.card .license-h{margin-top:21px}
.f-license{height:43px;margin-top:5px}
.license{display:grid;grid-template-columns:185px 324px 136px;align-items:center;padding-left:8px;color:#9e9e9e;letter-spacing:.12px}
.license em{font-style:normal;height:26px;line-height:24px;border:1px solid #e4e4e4;background:#fafafa;padding-left:4px;letter-spacing:.3px}
.license a{letter-spacing:0}
hr{width:708px;height:1px;border:0;background:#e8e8e8;margin:24px 0 0 56px;flex:none}
.f-author{height:65px;margin-top:5px}
.f-author.second{margin-top:0}
.author{padding:9px 0 0 8px;line-height:24px;letter-spacing:.25px}
.author div{display:flex;align-items:center}
.author div svg{margin-right:6px;color:#8a8a8a}
.author p{color:#9e9e9e;letter-spacing:.22px}
.author p svg{width:11px;height:11px;color:#42a5f5}
.author small{font-size:12px;letter-spacing:-.1px}
.f-text{margin-top:5px}
.prose{font:15.270px/24px "Liberation Serif",serif}

.lone{margin:8px 0 0 56px}
.h-decision{margin-top:35.500px}
.f-result{height:48px;margin-top:8.500px}
.result{color:#9e9e9e;letter-spacing:.2px;line-height:16px}
.result label{height:22px;line-height:22px}
.f-reason{height:62px;margin-top:8px}
.h-requests{margin-top:16.500px}
.f-request{height:214px}
.request{padding:12px 8px 0;letter-spacing:.3px}
.refbar{display:block;height:24px;line-height:23px;border-radius:2px;background:#f4f4f4;padding-left:8px;font-size:12px;word-spacing:-3.500px;letter-spacing:0}
.violet{background:#e9e2ee}
h5{font-size:16.500px;line-height:24px;margin-top:11px;letter-spacing:.7px}
.card h5{margin-top:11px}
.request p{padding-top:11.500px}
.request .based{background:#f8f8f8;height:32.500px;margin-top:21.500px}
.request .chip{height:25px}
.h-incontext{margin-top:16.500px}
.f-row{height:24px}
.h-rating{margin-top:36px}
.f-stars{height:35px;margin-top:8px}
.stars{display:flex;align-items:center;gap:4px;color:#ffd600;padding-bottom:5px}
.stars svg{width:18px;height:18px}
.stars .dim{color:#e0e0e0}
.f-review{height:156px;margin-top:8px}
.h-notes{margin-top:24px}
.f-notes{height:151px}
.f-notes .request{padding-top:11px}
.card h5.sm{font-size:13.500px;margin-top:7px;letter-spacing:.3px}
.f-notes .request p{padding-top:7px}
.h-contextual{margin-top:15px}
```
